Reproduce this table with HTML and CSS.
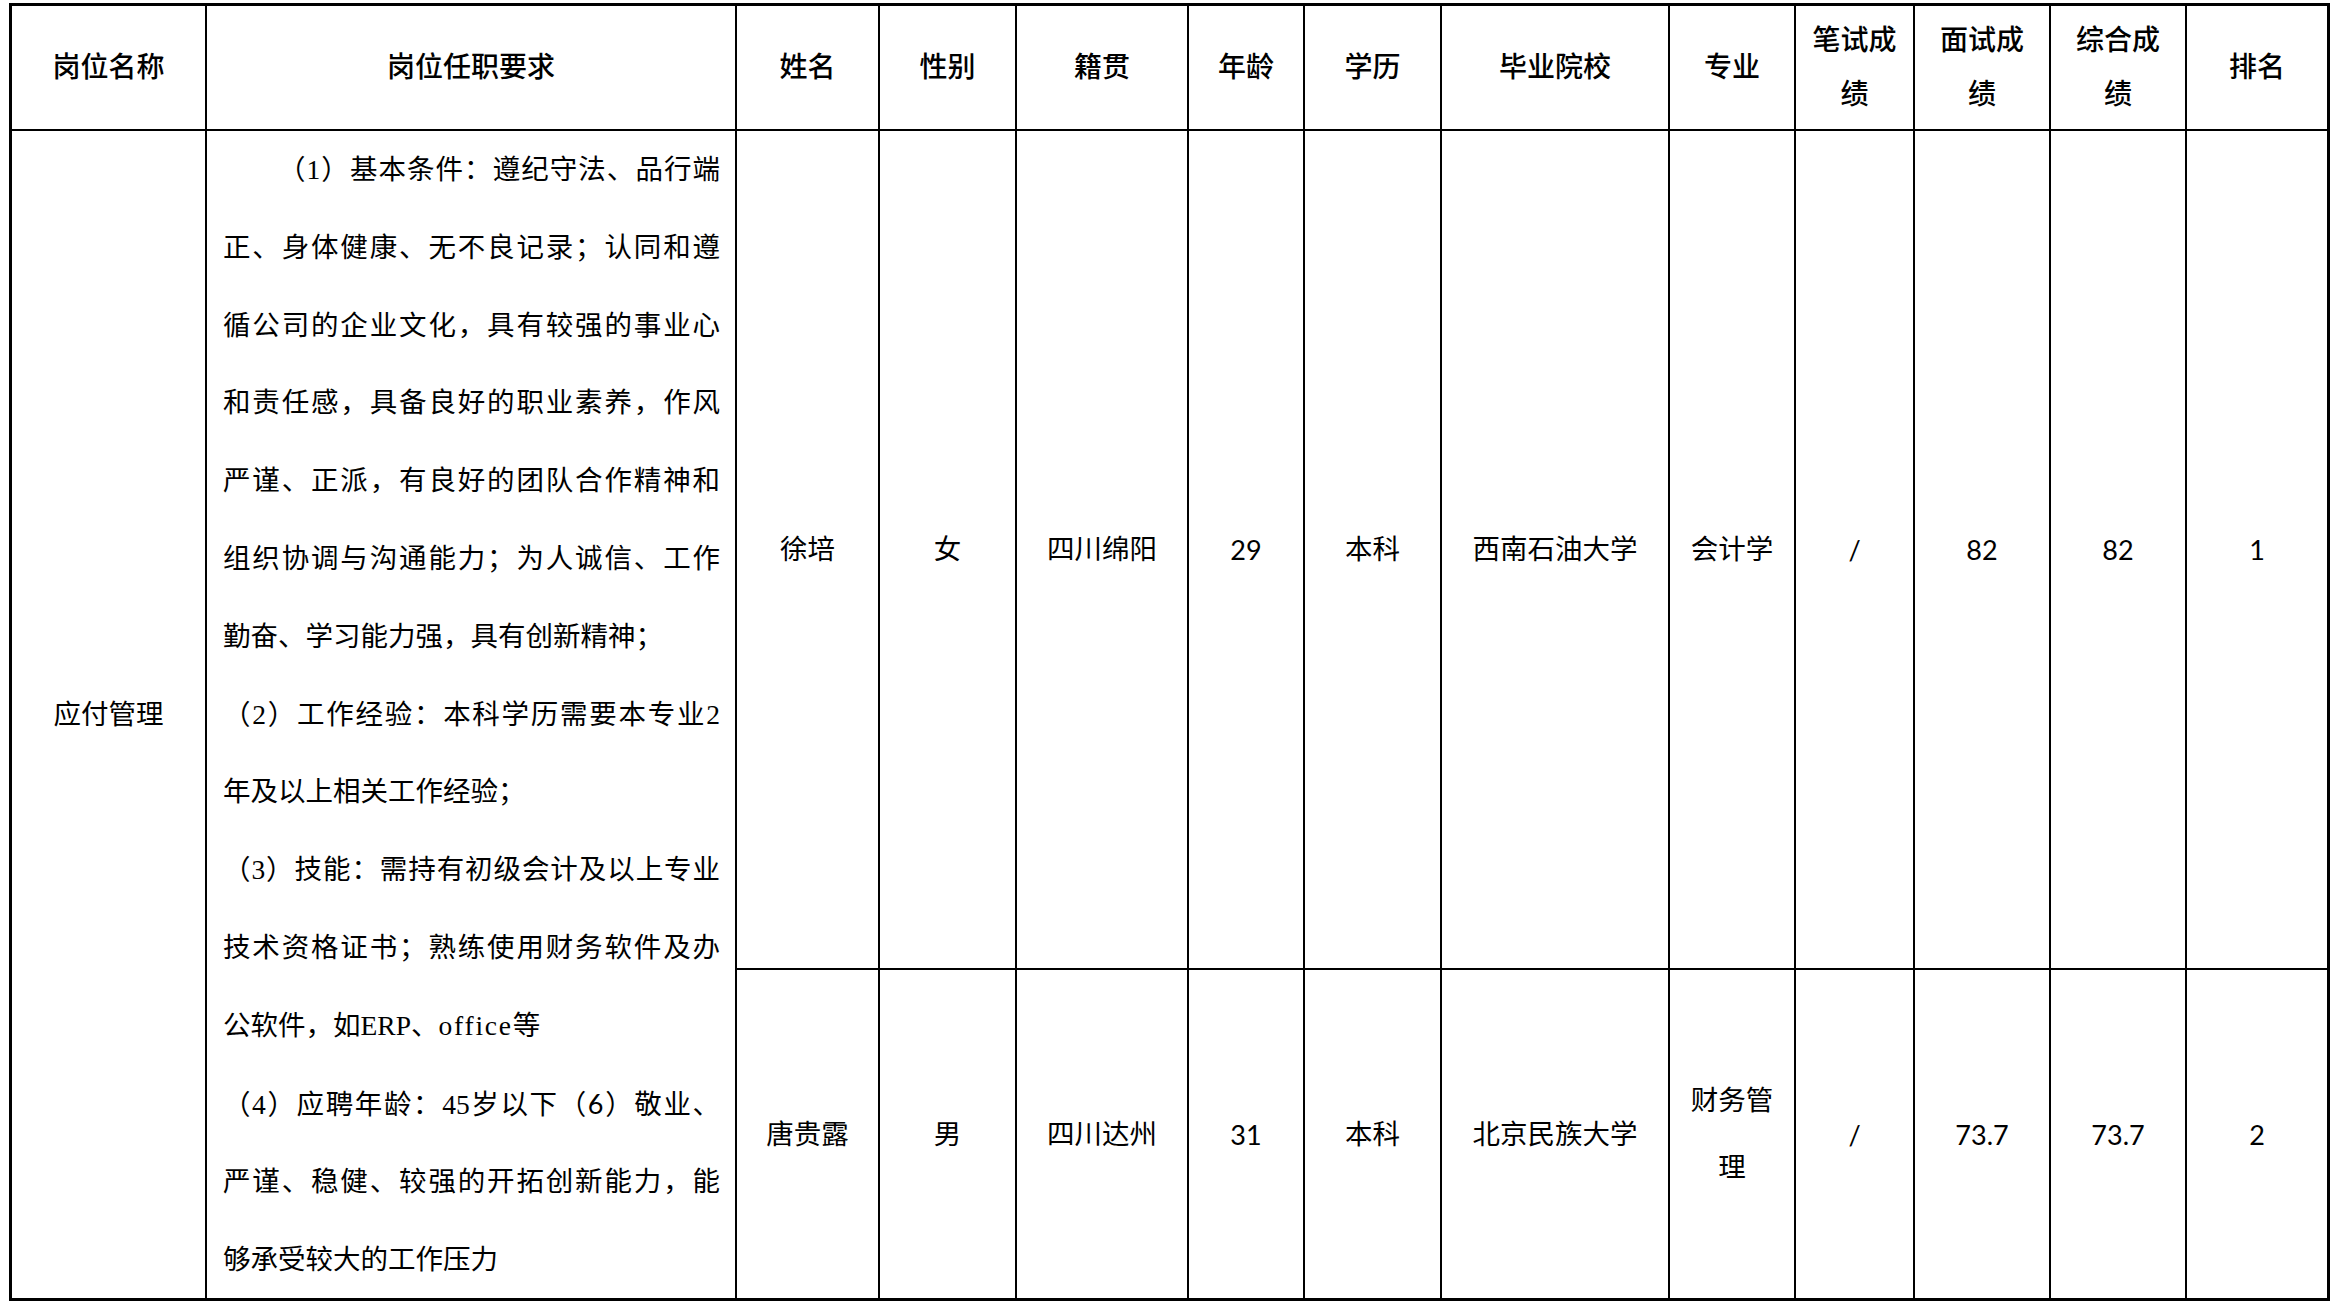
FILE: index.html
```html
<!DOCTYPE html>
<html lang="zh-CN">
<head>
<meta charset="utf-8">
<title>应付管理岗位成绩表</title>
<link rel="stylesheet" href="styles.css">
</head>
<body>
<div class="sheet">
  <div class="cell head">岗位名称</div>
  <div class="cell head">岗位任职要求</div>
  <div class="cell head">姓名</div>
  <div class="cell head">性别</div>
  <div class="cell head">籍贯</div>
  <div class="cell head">年龄</div>
  <div class="cell head">学历</div>
  <div class="cell head">毕业院校</div>
  <div class="cell head">专业</div>
  <div class="cell head">笔试成绩</div>
  <div class="cell head">面试成绩</div>
  <div class="cell head">综合成绩</div>
  <div class="cell head">排名</div>

  <div class="cell post">应付管理</div>
  <div class="cell req">
    <p class="ln first">（1）基本条件：遵纪守法、品行端</p>
    <p class="ln">正、身体健康、无不良记录；认同和遵</p>
    <p class="ln">循公司的企业文化，具有较强的事业心</p>
    <p class="ln">和责任感，具备良好的职业素养，作风</p>
    <p class="ln">严谨、正派，有良好的团队合作精神和</p>
    <p class="ln">组织协调与沟通能力；为人诚信、工作</p>
    <p class="ln end">勤奋、学习能力强，具有创新精神；</p>
    <p class="ln">（2）工作经验：本科学历需要本专业2</p>
    <p class="ln end">年及以上相关工作经验；</p>
    <p class="ln">（3）技能：需持有初级会计及以上专业</p>
    <p class="ln">技术资格证书；熟练使用财务软件及办</p>
    <p class="ln end">公软件，如ERP、<span class="lat">office</span>等</p>
    <p class="ln">（4）应聘年龄：45岁以下（<span class="num">6</span>）敬业、</p>
    <p class="ln">严谨、稳健、较强的开拓创新能力，能</p>
    <p class="ln end">够承受较大的工作压力</p>
  </div>

  <div class="cell">徐培</div>
  <div class="cell">女</div>
  <div class="cell">四川绵阳</div>
  <div class="cell num">29</div>
  <div class="cell">本科</div>
  <div class="cell">西南石油大学</div>
  <div class="cell">会计学</div>
  <div class="cell num">/</div>
  <div class="cell num">82</div>
  <div class="cell num">82</div>
  <div class="cell num">1</div>

  <div class="cell">唐贵露</div>
  <div class="cell">男</div>
  <div class="cell">四川达州</div>
  <div class="cell num">31</div>
  <div class="cell">本科</div>
  <div class="cell">北京民族大学</div>
  <div class="cell wrap">财务管理</div>
  <div class="cell num">/</div>
  <div class="cell num">73.7</div>
  <div class="cell num">73.7</div>
  <div class="cell num">2</div>
</div>
</body>
</html>
```

FILE: styles.css
```css
html, body {
  margin: 0;
  padding: 0;
  background: #fff;
}

body {
  font-family: "Liberation Serif", "Noto Sans CJK SC", serif;
  color: #000;
}

.sheet {
  display: grid;
  grid-template-columns: 193px 528px 141px 135px 170px 114px 135px 226px 124px 117px 134px 134px 140px;
  grid-template-rows: 123px 837px 328px;
  gap: 2px;
  padding: 3px;
  background: #000;
  width: max-content;
  margin: 3px 0 0 9px;
}

.cell {
  background: #fff;
  display: flex;
  align-items: center;
  justify-content: center;
  text-align: center;
  padding: 0 12px;
  font-size: 27.5px;
  line-height: 67px;
}

.head {
  font-size: 28px;
  line-height: 54px;
  font-weight: 500;
}

.post,
.req {
  grid-row: span 2;
}

.req {
  display: block;
  padding: 0 15px 0 16px;
  text-align: justify;
}

.ln {
  margin: 0;
  line-height: 77.8px;
  text-align: justify;
  text-align-last: justify;
  white-space: nowrap;
}

.ln.first {
  text-indent: 55px;
}

.ln.end {
  text-align-last: left;
}

.lat {
  letter-spacing: 1.8px;
}

.num {
  font-family: Lato, "Liberation Sans", sans-serif;
  font-size: 27px;
}
```
